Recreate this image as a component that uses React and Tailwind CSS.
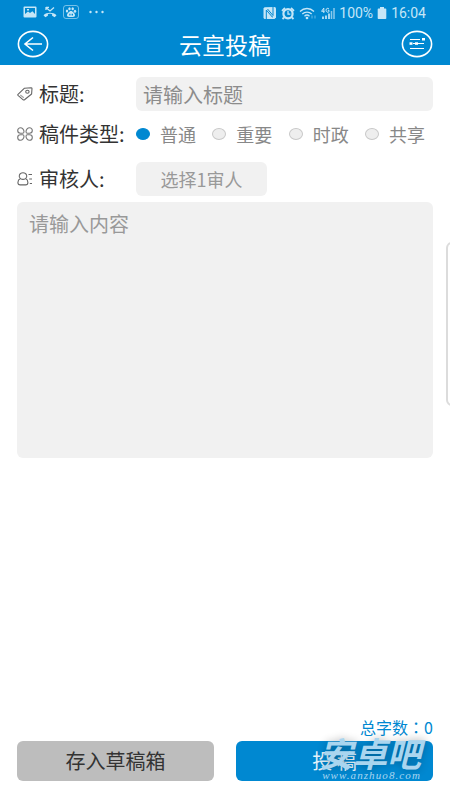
import { useState } from "react";

const types = ["普通", "重要", "时政", "共享"];

function StatusBar() {
  return (
    <div className="flex h-[26px] items-center justify-between pl-[23px] pr-6 text-[#c5e6f7]">
      <div className="flex items-center gap-[6px] pb-[2px]">
        <svg width="14" height="12" viewBox="0 0 14 12">
          <path fill="currentColor" fillRule="evenodd" d="M1.5 0.5h11a1 1 0 0 1 1 1v9a1 1 0 0 1-1 1h-11a1 1 0 0 1-1-1v-9a1 1 0 0 1 1-1zM2 2v6l3-2.6 2 1.6 2.4-1.8L12 8V2zM4 3h2v1.5H4z" />
        </svg>
        <svg width="14" height="12" viewBox="0 0 14 12">
          <path d="M3 1.5l4 3.5 4-3.5M3 1v3M3 1.3h3" fill="none" stroke="currentColor" strokeWidth="1.3" />
          <path d="M0.5 9.2C4 6 10 6 13.5 9.2l-1.8 2-2.6-1.4V8.2c-1.4-.5-2.8-.5-4.2 0v1.6l-2.6 1.4z" fill="currentColor" />
        </svg>
        <svg width="16" height="14" viewBox="0 0 16 14">
          <rect x="0.5" y="0.5" width="15" height="13" rx="2.5" fill="none" stroke="currentColor" strokeOpacity="0.6" />
          <g fill="currentColor">
            <ellipse cx="4" cy="6" rx="1.2" ry="1.5" />
            <ellipse cx="6.5" cy="3.8" rx="1.2" ry="1.5" />
            <ellipse cx="9.7" cy="3.8" rx="1.2" ry="1.5" />
            <ellipse cx="12" cy="6.2" rx="1.2" ry="1.5" />
            <path fillRule="evenodd" d="M8 6c1.6 0 4 2.6 4 4.2s-1.5 1.8-4 1.8-4-.2-4-1.8S6.4 6 8 6zM6.3 8.8v1.7h1.2V8.8zM8.6 8.8v1.7h1.4V8.8z" />
          </g>
        </svg>
        <svg width="16" height="4" viewBox="0 0 16 4" className="ml-1">
          <g fill="currentColor">
            <circle cx="1.5" cy="2" r="1.2" />
            <circle cx="7.5" cy="2" r="1.2" />
            <circle cx="13.5" cy="2" r="1.2" />
          </g>
        </svg>
      </div>
      <div className="flex items-center gap-1">
        <svg width="14" height="12" viewBox="0 0 14 12">
          <path d="M1.5 0.300L11.500 0a1.500 1.500 0 0 1 1.500 1.500v9l-1.500 1.500h-10L0.500 11V1.500z" fill="currentColor" />
          <path d="M3.300 12V3l6 7h.7M10 0v8.500L4.500 2" fill="none" stroke="#0088d1" strokeWidth="1" />
        </svg>
        <svg width="14" height="13" viewBox="0 0 14 13">
          <path d="M1 3.8L4 1M13 3.8L10 1M3 10.5L1.5 12M11 10.5l1.5 1.5" stroke="currentColor" strokeWidth="1.8" />
          <circle cx="7" cy="6.8" r="4.6" fill="#0088d1" stroke="currentColor" strokeWidth="2.2" />
          <path d="M7 4v3.2h2.3" fill="none" stroke="currentColor" strokeWidth="1.3" />
        </svg>
        <svg width="18" height="13" viewBox="0 0 18 13" fill="none" stroke="currentColor" strokeWidth="1.3">
          <path d="M1 4.5c4-4 10-4 14 0M3.3 7c2.6-2.6 6.8-2.6 9.4 0M5.5 9.2c1.5-1.4 3.5-1.4 5 0" />
          <circle cx="8" cy="11" r="0.7" />
          <path d="M13 8.5v3M16 8.5v3" strokeOpacity="0.4" />
        </svg>
        <svg width="14" height="13" viewBox="0 0 14 13" fill="none" stroke="currentColor">
          <path d="M2.8 6V1L0.6 4.3h3M8 2C7 .7 5 1.2 5 3.2s2 2.600 3 1.500V3.300H6.800" />
          <path d="M2 12V9.5M5 12V8.5M8 12V6.5" strokeWidth="1.7" />
          <path d="M10.5 12V4M13 12V1" strokeWidth="1.5" strokeOpacity="0.7" />
        </svg>
        <span className="font-[Roboto,sans-serif] text-sm">100%</span>
        <svg width="10" height="12" viewBox="0 0 10 12">
          <path fill="currentColor" d="M3 0h4v1.5h1.5a.8.8 0 0 1 .8.8v8.9a.8.8 0 0 1-.8.8h-7a.8.8 0 0 1-.8-.8V2.300a.8.8 0 0 1 .8-.8H3z" />
        </svg>
        <span className="font-[Roboto,sans-serif] text-sm">16:04</span>
      </div>
    </div>
  );
}

function TagIcon() {
  return (
    <svg width="16" height="14" viewBox="0 0 16 14" fill="none" stroke="#666" strokeWidth="1.1" strokeLinejoin="round" className="shrink-0">
      <path d="M1 7.3L7.500 1.200 14 .7c.6 0 1 .3 1 .8l-.4 5.500L7.500 12.800c-.4.300-.9.300-1.300 0L1 8.300c-.3-.3-.3-.7 0-1z" />
      <path d="M3.300 8l3.500 2.800" strokeOpacity="0.6" />
      <ellipse cx="10.4" cy="4.700" rx="1.7" ry="1.5" />
    </svg>
  );
}

function GridIcon() {
  return (
    <svg width="16" height="14" viewBox="0 0 16 14" fill="none" stroke="#777" strokeWidth="1.1" strokeLinejoin="round" className="shrink-0">
      <path d="M7 4.800c0 .8-.6 1.400-1.400 1.400H3.500C1.800 6.200.7 5 .7 3.500S1.800.7 3.500.7 7 2.500 7 4.800z" />
      <path d="M9 4.800c0 .8.600 1.400 1.400 1.400h2.100c1.700 0 2.800-1.200 2.800-2.700S14.200.7 12.500.7 9 2.500 9 4.800z" />
      <path d="M7 9.200c0-.8-.6-1.400-1.400-1.400H3.500C1.800 7.800.7 9 .7 10.500s1.100 2.800 2.800 2.800S7 11.500 7 9.200z" />
      <path d="M9 9.200c0-.8.6-1.400 1.400-1.400h2.100c1.700 0 2.800 1.200 2.800 2.700s-1.100 2.800-2.800 2.800S9 11.500 9 9.200z" />
    </svg>
  );
}

function PersonIcon() {
  return (
    <svg width="16" height="14" viewBox="0 0 16 14" fill="none" stroke="#666" strokeWidth="1.1" strokeLinejoin="round" className="shrink-0">
      <path d="M3.500 6.600C1.200 5 2 .8 6 .8s4.800 4.200 2.500 5.800c1.600.8 2.400 2.200 2.400 3.800 0 1.900-.8 2.500-2.300 2.500H3.200C1.700 12.900.9 12.300.9 10.400c0-1.700.9-3 2.600-3.800zM3.500 6.600c1.500 1 3.500 1 5 0" />
      <path d="M11.500 2.500H15M12.200 7H15M12.800 11.500H15" />
    </svg>
  );
}

export default function App() {
  const [type, setType] = useState("普通");
  const [text, setText] = useState("");

  return (
    <div className="relative flex min-h-screen flex-col overflow-hidden bg-white font-['Noto_Sans_CJK_SC',sans-serif]">
      <header className="bg-[#0088d1] pb-[6px] text-white">
        <StatusBar />
        <div className="flex h-[33px] items-center justify-between px-[17px] pt-[3px]">
          <button type="button" aria-label="返回">
            <svg width="32" height="28" viewBox="0 0 32 28" fill="none" stroke="currentColor" strokeWidth="1.6">
              <ellipse cx="16" cy="14" rx="14.6" ry="12.6" />
              <path d="M25 14H8M16 7.5L8 14l8 6.5" />
            </svg>
          </button>
          <h1 className="text-[23px] leading-7">云宣投稿</h1>
          <button type="button" aria-label="草稿列表">
            <svg width="32" height="28" viewBox="0 0 32 28" fill="none" stroke="currentColor">
              <ellipse cx="16" cy="14" rx="14.6" ry="12.6" strokeWidth="1.6" />
              <path d="M9 9.5h10M12 13.500h11M9 18.500h14" strokeWidth="1" />
              <g fill="currentColor" stroke="none">
                <rect x="21" y="8" width="3" height="2.500" />
                <rect x="8.500" y="12.300" width="3" height="2.500" />
                <rect x="14" y="12.300" width="3" height="2.500" />
              </g>
            </svg>
          </button>
        </div>
      </header>

      <form className="flex flex-1 flex-col px-[17px] pb-[19px] pt-3" onSubmit={(e) => e.preventDefault()}>
        <div className="flex h-[34px] items-center">
          <label htmlFor="title" className="flex w-[119px] shrink-0 items-center gap-[6px] whitespace-nowrap text-xl text-[#333]">
            <TagIcon />
            标题:
          </label>
          <input
            id="title"
            placeholder="请输入标题"
            className="h-full min-w-0 flex-1 rounded-md bg-[#f1f1f1] px-[7px] text-xl text-[#333] outline-none placeholder:text-[#8c8c8c]"
          />
        </div>

        <div role="radiogroup" aria-labelledby="type-label" className="flex h-[46px] items-center">
          <span id="type-label" className="flex w-[119px] shrink-0 items-center gap-[6px] whitespace-nowrap text-xl text-[#333]">
            <GridIcon />
            稿件类型:
          </span>
          <div className="flex flex-1 justify-between pr-2">
            {types.map((t) => (
              <label key={t} className="flex items-center gap-[10px] whitespace-nowrap text-lg text-[#888]">
                <input
                  type="radio"
                  name="type"
                  checked={type === t}
                  onChange={() => setType(t)}
                  className="h-3 w-[14px] appearance-none rounded-[50%] border border-[#c8c8c8] bg-[#eee] checked:border-[#0088d1] checked:bg-[#0088d1]"
                />
                {t}
              </label>
            ))}
          </div>
        </div>

        <div className="mt-[5px] flex h-[34px] items-center">
          <label htmlFor="reviewer" className="flex w-[119px] shrink-0 items-center gap-[6px] whitespace-nowrap text-xl text-[#333]">
            <PersonIcon />
            审核人:
          </label>
          <button id="reviewer" type="button" className="h-full w-[131px] rounded-md bg-[#f1f1f1] text-lg text-[#999]">
            选择1审人
          </button>
        </div>

        <textarea
          aria-label="内容"
          placeholder="请输入内容"
          value={text}
          onChange={(e) => setText(e.target.value)}
          className="mt-[6px] h-64 w-full resize-none rounded-md bg-[#f1f1f1] px-3 py-2 text-xl text-[#333] outline-none placeholder:text-[#999]"
        />

        <p className="mt-auto text-right text-base leading-6 text-[#0088d1]">
          总字数<span className="font-['Noto_Sans_CJK_TC',sans-serif]" lang="zh-Hant">：</span>{text.length}
        </p>
        <div className="relative mt-[2px] grid grid-cols-2 gap-[22px]">
          <button type="button" className="h-10 rounded-md bg-[#bdbdbd] text-xl text-[#333]">
            存入草稿箱
          </button>
          <button type="submit" className="h-10 rounded-md bg-[#0088d1] text-xl text-[#e4f3fb]">
            投 稿
          </button>
          <div className="pointer-events-none absolute -top-1 right-3 flex flex-col items-end italic text-[#a9d5ef]">
            <div className="text-[34px] font-bold leading-8 [text-shadow:0_0_8px_rgba(0,0,0,0.3)]">安卓吧</div>
            <div className="font-['Liberation_Serif',serif] text-[11px] leading-3 tracking-widest">www.anzhuo8.com</div>
          </div>
        </div>
      </form>

      <div className="absolute -right-2 top-[242px] h-[164px] w-3 rounded-lg border-2 border-[#dcdcdc] bg-white" />
    </div>
  );
}
